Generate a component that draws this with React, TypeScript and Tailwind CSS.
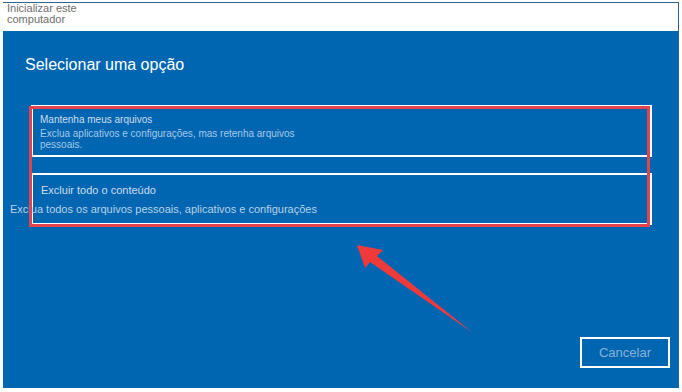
export default function App() {
  return (
    <div className="relative w-[682px] h-[392px] bg-white pt-[2px] pl-[3px] overflow-hidden" style={{ fontFamily: '"Liberation Sans", Arial, sans-serif' }}>
      <div className="flex flex-col w-[676px] h-[386px] border-t border-r border-[#2c648c]">
        {/* title bar */}
        <div className="h-[28px] bg-white pl-[4px] text-[11px] leading-[11px] text-[#6e6e6e]">
          <div>Inicializar este</div>
          <div>computador</div>
        </div>

        {/* blue panel */}
        <div className="relative flex-1 flex flex-col bg-[#0066b2]">
          <h1 className="pl-[22px] pt-[24px] text-[16px] leading-[20px] text-white">Selecionar uma opção</h1>

          <div className="flex flex-col gap-[16px] pl-[28px] pr-[26px] mt-[30px]">
            <div className="h-[52px] border-2 border-white pl-[7px] pt-[7px]">
              <div className="text-[10px] leading-[12px] text-[#d0dceb]">Mantenha meus arquivos</div>
              <div className="mt-[2px] w-[280px] text-[10px] leading-[11px] text-[#a9c7e6]">
                Exclua aplicativos e configurações, mas retenha arquivos pessoais.
              </div>
            </div>
            <div className="h-[52px] border-2 border-white pl-[8px] pt-[9px]">
              <div className="text-[11px] leading-[13px] text-[#d0dceb]">Excluir todo o conteúdo</div>
              <div className="-ml-[31px] mt-[6px] text-[11px] leading-[13px] text-[#bcd0e4] whitespace-nowrap">
                Exclua todos os arquivos pessoais, aplicativos e configurações
              </div>
            </div>
          </div>

          <div className="mt-auto flex justify-end pr-[8px] pb-[20px]">
            <div className="w-[90px] h-[31px] border-2 border-white flex items-center justify-center text-[13px] text-[#8cb1d4]">
              Cancelar
            </div>
          </div>

          {/* red annotation box */}
          <div className="absolute left-[26px] top-[75px] w-[621px] h-[121px] border-[3px] border-[#e2434d]" />
        </div>
      </div>

      {/* red arrow */}
      <svg className="absolute left-0 top-0" width="682" height="392" viewBox="0 0 682 392">
        <polygon points="357,245 383,250 377,256 473,333 370,262 365,268" fill="#f03a3a" />
      </svg>
    </div>
  );
}
